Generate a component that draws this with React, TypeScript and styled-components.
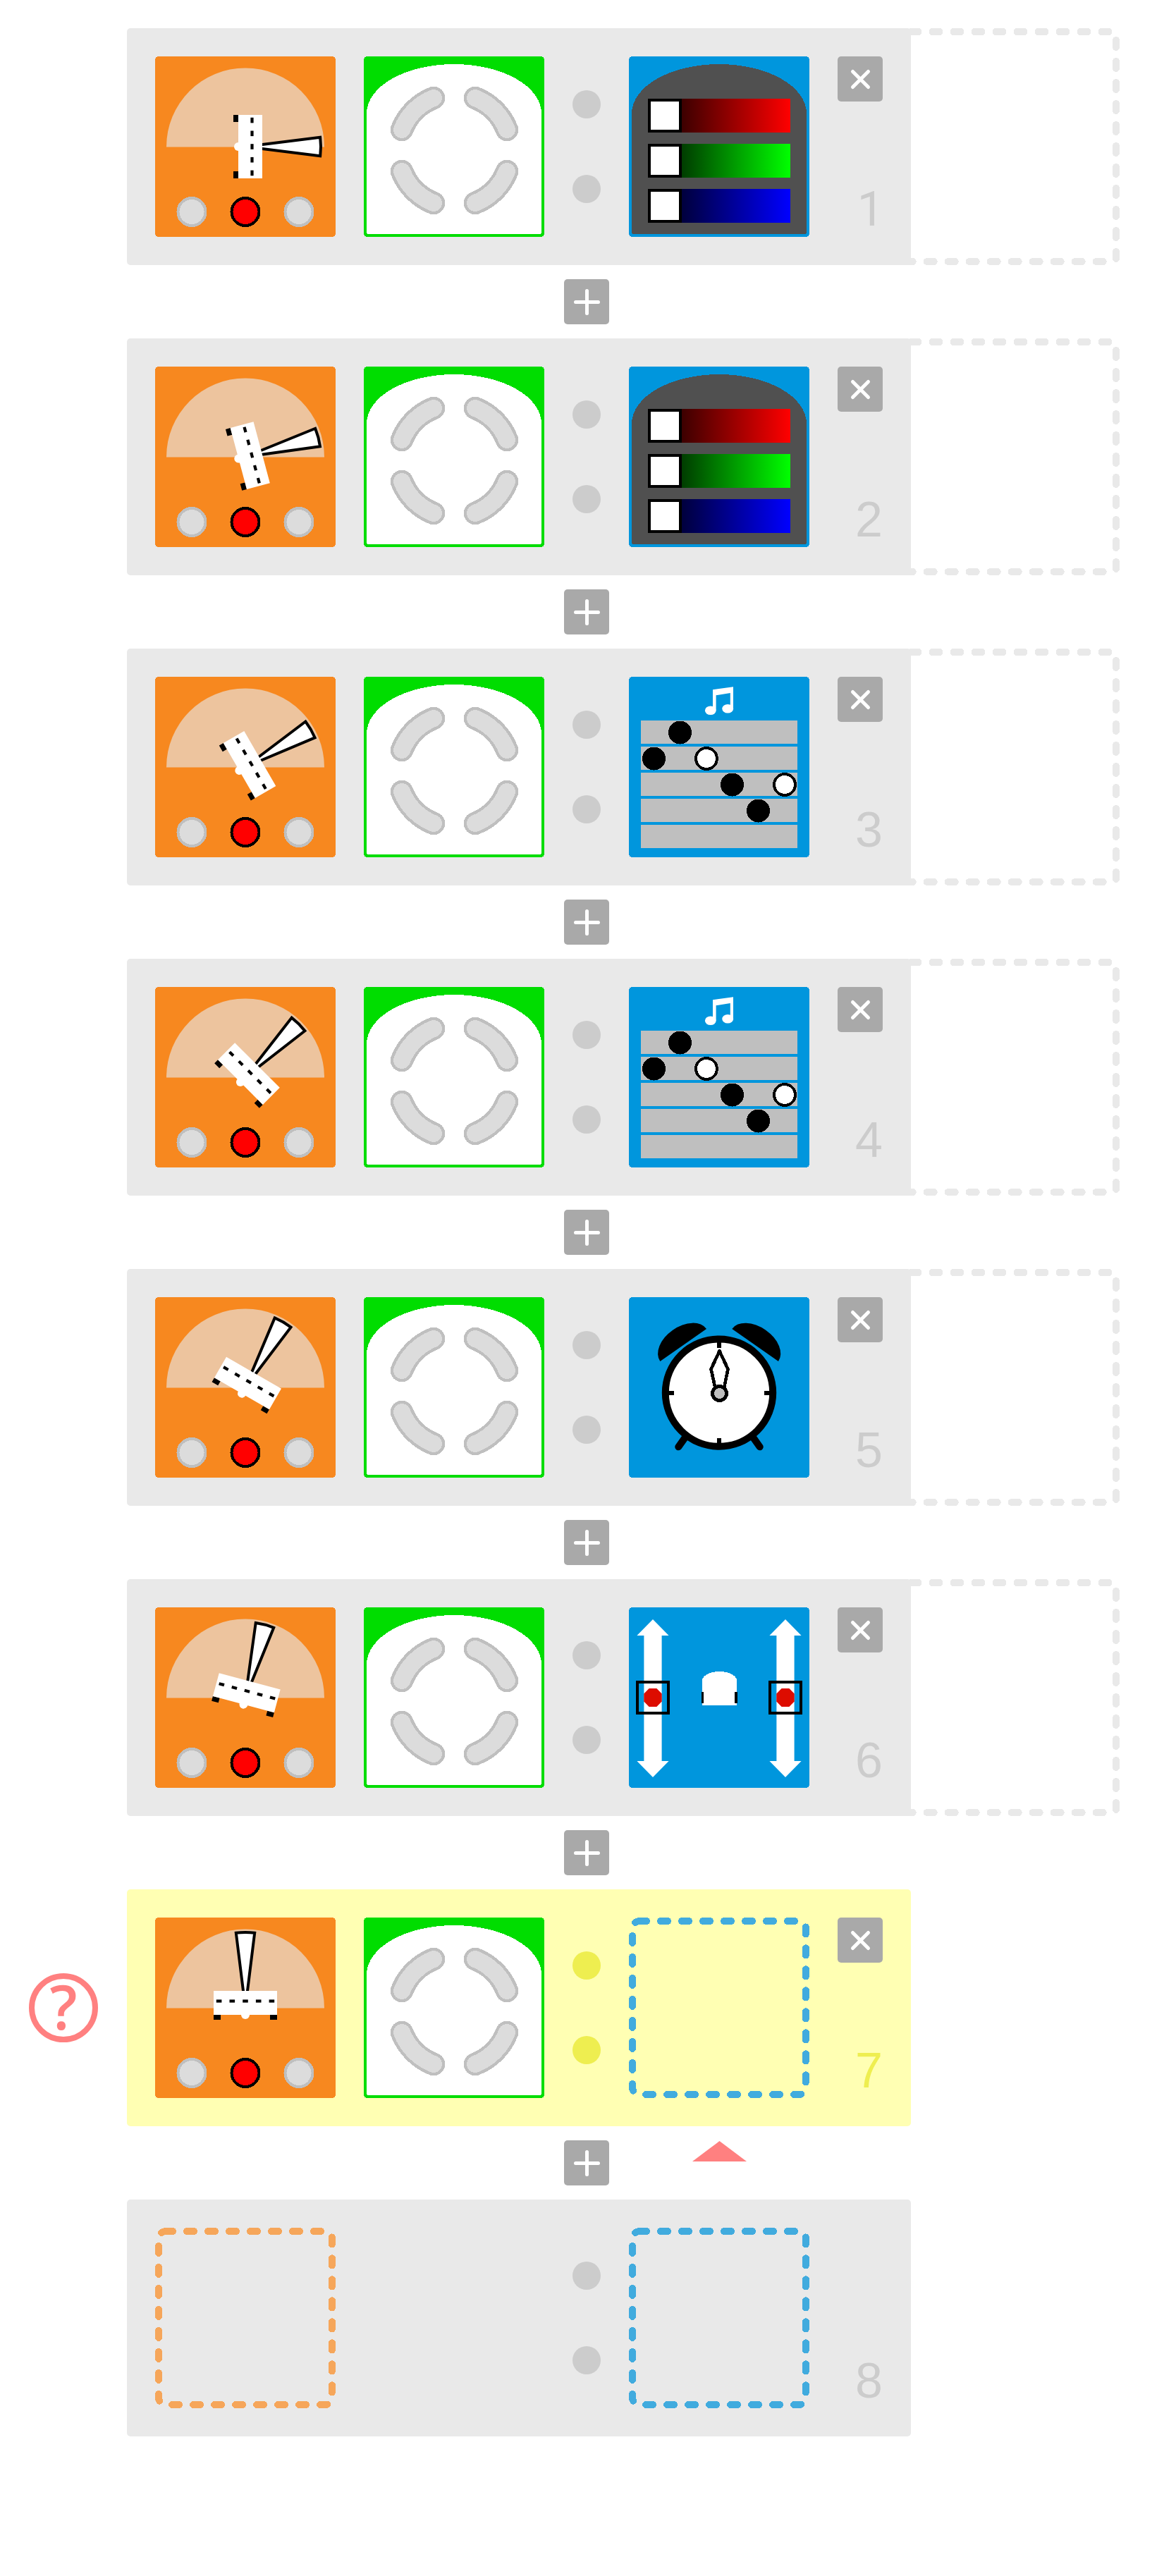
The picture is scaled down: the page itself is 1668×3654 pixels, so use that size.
import React from "react";
import styled, { createGlobalStyle } from "styled-components";

const colors = {
  event: "#f7881f",
  button: "#00dd00",
  action: "#0096dd",
  lane: "#e9e9e9",
  laneActive: "#ffffb3",
  mark: "#cccccc",
  markActive: "#eeee50",
  control: "#a9a9a9",
  hint: "#ff8080",
  off: "#dcdcdc",
  offEdge: "#bfbfbf",
};

const GlobalStyle = createGlobalStyle`
  body {
    margin: 0;
    background: #fff;
    font-family: "Liberation Sans", Arial, sans-serif;
  }
`;

const Program = styled.main`
  box-sizing: border-box;
  width: 1668px;
  min-height: 3654px;
  padding: 40px 0;
`;

const Row = styled.div`
  display: flex;
  height: 336px;
`;

const Gutter = styled.div`
  display: flex;
  flex: none;
  width: 180px;
  align-items: center;
  justify-content: center;
`;

const Hint = styled.div`
  box-sizing: border-box;
  width: 98px;
  height: 98px;
  border: 8px solid ${colors.hint};
  border-radius: 50%;
  color: ${colors.hint};
  font: 600 86px/77px "Open Sans", sans-serif;
  text-align: center;
`;

const Lane = styled.section<{ $active: boolean }>`
  box-sizing: border-box;
  display: flex;
  flex: none;
  gap: 40px;
  width: 1112px;
  padding: 40px;
  border-radius: 5px;
  background: ${(p) => (p.$active ? colors.laneActive : colors.lane)};
`;

const Card = styled.svg`
  display: block;
  flex: none;
  width: 256px;
  height: 256px;
`;

const EmptyCell = styled.div`
  flex: none;
  width: 256px;
`;

const Dots = styled.div`
  display: flex;
  flex-direction: column;
  flex: none;
  justify-content: center;
  gap: 80px;
  width: 40px;
`;

const Dot = styled.span<{ $active: boolean }>`
  height: 40px;
  border-radius: 50%;
  background: ${(p) => (p.$active ? colors.markActive : colors.mark)};
`;

const Side = styled.div`
  display: flex;
  flex-direction: column;
  flex: none;
  width: 64px;
`;

const SquareButton = styled.button`
  display: block;
  width: 64px;
  height: 64px;
  padding: 0;
  border: 0;
  border-radius: 5px;
  background: ${colors.control};
`;

const Glyph = styled.svg`
  display: block;
  width: 64px;
  height: 64px;
  fill: none;
  stroke: #fff;
  stroke-width: 5;
  stroke-linecap: round;
`;

const RowNumber = styled.span<{ $active: boolean; $narrow: boolean }>`
  margin-top: auto;
  padding-left: ${(p) => (p.$narrow ? "2px" : "0")};
  color: ${(p) => (p.$active ? colors.markActive : colors.mark)};
  font-family: ${(p) => (p.$narrow ? "Roboto" : '"Liberation Sans"')}, sans-serif;
  font-size: ${(p) => (p.$narrow ? 68 : 70)}px;
  line-height: ${(p) => (p.$narrow ? 78 : 78)}px;
  text-align: right;
  margin-right: ${(p) => (p.$narrow ? "-2px" : "0")};
`;

const Extension = styled.svg`
  display: block;
  flex: none;
  width: 296px;
  height: 336px;
  overflow: visible;
  fill: none;
  stroke: ${colors.lane};
  stroke-width: 10;
  stroke-linecap: round;
  stroke-dasharray: 10 20;
  shape-rendering: crispEdges;
`;

const Connector = styled.div`
  box-sizing: border-box;
  display: flex;
  gap: 118px;
  height: 104px;
  padding: 20px 0 0 800px;
`;

const Pointer = styled.svg`
  display: block;
  width: 77px;
  height: 29px;
  margin-top: 1px;
  fill: ${colors.hint};
`;

const BODY = "M4 81A124 70 0 0 1 252 81V249a3 3 0 0 1 -3 3H7a3 3 0 0 1 -3 -3Z";

function Tile({ fill }: { fill: string }) {
  return <rect width="256" height="256" rx="5" fill={fill} shapeRendering="crispEdges" />;
}

function ProximityCard({ angle }: { angle: number }) {
  const lamps = [
    { x: 52, fill: colors.off, edge: colors.offEdge },
    { x: 128, fill: "#ff0000", edge: "#000" },
    { x: 204, fill: colors.off, edge: colors.offEdge },
  ];
  return (
    <Card viewBox="0 0 256 256">
      <Tile fill={colors.event} />
      <path d="M16 128.4A112 112 0 0 1 240 128.4Z" fill="#edc49e" />
      <g transform={`rotate(${angle} 128 128)`}>
        <path
          d="M128 128L114.8 21.8A107 107 0 0 1 141.2 21.8Z"
          fill="#fff"
          stroke="#000"
          strokeWidth="4"
        />
        <path d="M83 138h10v7h-10zM163 138h10v7h-10z" fill="#000" />
        <circle cx="128" cy="138" r="6" fill="#fff" />
        <rect x="83" y="104" width="90" height="34" fill="#fff" />
        {[0, 1, 2, 3, 4].map((i) => (
          <rect key={i} x={86.8 + i * 18.7} y="116.4" width="7.6" height="4.2" fill="#000" />
        ))}
      </g>
      {lamps.map((l) => (
        <circle
          key={l.x}
          cx={l.x}
          cy="220.5"
          r="19.5"
          fill={l.fill}
          stroke={l.edge}
          strokeWidth="4"
          shapeRendering="crispEdges"
        />
      ))}
    </Card>
  );
}

function ButtonsCard() {
  const arc = "M54 104A80 80 0 0 1 99 59";
  const flips = ["1 1", "-1 1", "1 -1", "-1 -1"];
  return (
    <Card viewBox="0 0 256 256">
      <Tile fill={colors.button} />
      <path d={BODY} fill="#fff" shapeRendering="crispEdges" />
      {flips.map((s) => (
        <g
          key={s}
          transform={`translate(128.5 133.5) scale(${s}) translate(-128.5 -133.5)`}
          fill="none"
          strokeLinecap="round"
          shapeRendering="crispEdges"
        >
          <path d={arc} stroke={colors.offEdge} strokeWidth="32.5" />
          <path d={arc} stroke={colors.off} strokeWidth="24" />
        </g>
      ))}
    </Card>
  );
}

function ColorCard() {
  const channels = [
    { id: "red", color: "#ff0000", y: 60 },
    { id: "green", color: "#00ff00", y: 124 },
    { id: "blue", color: "#0000ff", y: 188 },
  ];
  return (
    <Card viewBox="0 0 256 256">
      <defs>
        {channels.map((c) => (
          <linearGradient key={c.id} id={`ramp-${c.id}`}>
            <stop offset="0" stopColor="#000" />
            <stop offset="1" stopColor={c.color} />
          </linearGradient>
        ))}
      </defs>
      <Tile fill={colors.action} />
      <path d={BODY} fill="#505050" shapeRendering="crispEdges" />
      {channels.map((c) => (
        <g key={c.id}>
          <rect x="27" y={c.y} width="202" height="48" fill={`url(#ramp-${c.id})`} />
          <rect x="29" y={c.y + 2} width="44" height="44" fill="#fff" stroke="#000" strokeWidth="4" />
        </g>
      ))}
    </Card>
  );
}

function MusicCard() {
  const notes = [
    { row: 1, long: false },
    { row: 0, long: false },
    { row: 1, long: true },
    { row: 2, long: false },
    { row: 3, long: false },
    { row: 2, long: true },
  ];
  return (
    <Card viewBox="0 0 256 256">
      <Tile fill={colors.action} />
      <g fill="#fff">
        <path d="M119 18.3L148 14.3V45.3H143.8V23L123.6 26.2V47.7H119Z" />
        <ellipse cx="115.8" cy="47.7" rx="7.9" ry="6.3" />
        <ellipse cx="140.2" cy="45.3" rx="7.9" ry="6.3" />
      </g>
      {[0, 1, 2, 3, 4].map((i) => (
        <rect key={i} x="17" y={62 + i * 37} width="222" height="33" fill={colors.offEdge} />
      ))}
      {notes.map((n, i) => (
        <circle
          key={i}
          cx={(n.long ? 36 : 35.5) + i * 37}
          cy={79 + n.row * 37}
          r={n.long ? 15 : 16.5}
          fill={n.long ? "#fff" : "#000"}
          stroke={n.long ? "#000" : "none"}
          strokeWidth="4"
          shapeRendering="crispEdges"
        />
      ))}
    </Card>
  );
}

function TimerCard() {
  return (
    <Card viewBox="0 0 256 256">
      <Tile fill={colors.action} />
      <path d="M44.3 91A40 26 -35 0 1 110 45Z" />
      <path d="M212 91A40 26 35 0 0 146.3 45Z" />
      <path d="M84 193L70.3 212.3M172 193L185.7 212.3" stroke="#000" strokeWidth="10" strokeLinecap="round" />
      <circle cx="128" cy="135.6" r="76.2" fill="#fff" stroke="#000" strokeWidth="10" />
      <path d="M128 60V72M128 200V212M52 136H64M192 136H204" stroke="#000" strokeWidth="6" />
      <g stroke="#000" shapeRendering="crispEdges">
        <path
          d="M122.5 129L116.5 102L128.5 76.5L140.5 102L135 129Z"
          fill="#fff"
          strokeWidth="4.6"
          strokeLinejoin="round"
        />
        <circle cx="128.5" cy="136.5" r="10" fill={colors.offEdge} strokeWidth="5" />
      </g>
    </Card>
  );
}

function MotorsCard() {
  return (
    <Card viewBox="0 0 256 256">
      <Tile fill={colors.action} />
      {[34, 222].map((x) => (
        <g key={x} transform={`translate(${x} 0)`}>
          <path
            d="M0 17L22.6 40H12.6V218H22.6L0 241L-22.6 218H-12.6V40H-22.6Z"
            fill="#fff"
          />
          <path
            d="M-5.4 115H5.4L12.7 122.5V133.5L5.4 141H-5.4L-12.7 133.5V122.5Z"
            fill="#dd0c00"
          />
          <rect x="-22" y="106" width="44" height="44" fill="none" stroke="#000" strokeWidth="4" />
        </g>
      ))}
      <g shapeRendering="crispEdges">
        <path d="M104 104A24.5 13 0 0 1 153 104V139H104Z" fill="#fff" />
        <path d="M103 120h3v16h-3zM150 120h4v16h-4z" fill="#000" />
      </g>
    </Card>
  );
}

function Placeholder({ color }: { color: string }) {
  return (
    <Card viewBox="0 0 256 256">
      <rect
        x="5"
        y="5"
        width="246"
        height="246"
        rx="10"
        fill="none"
        stroke={color}
        strokeWidth="10"
        strokeLinecap="round"
        strokeDasharray="10 20"
        shapeRendering="crispEdges"
      />
    </Card>
  );
}

type Action = "color" | "music" | "timer" | "motors" | "none";

interface Rule {
  angle?: number;
  action: Action;
  active?: boolean;
}

const rules: Rule[] = [
  { angle: 90, action: "color" },
  { angle: 75, action: "color" },
  { angle: 60, action: "music" },
  { angle: 45, action: "music" },
  { angle: 30, action: "timer" },
  { angle: 15, action: "motors" },
  { angle: 0, action: "none", active: true },
  { action: "none" },
];

function ActionCard({ kind }: { kind: Action }) {
  switch (kind) {
    case "color":
      return <ColorCard />;
    case "music":
      return <MusicCard />;
    case "timer":
      return <TimerCard />;
    case "motors":
      return <MotorsCard />;
    default:
      return <Placeholder color="#41abde" />;
  }
}

function RuleRow({ rule, index }: { rule: Rule; index: number }) {
  const active = Boolean(rule.active);
  const filled = rule.angle !== undefined;
  return (
    <Row>
      <Gutter>{active && <Hint>?</Hint>}</Gutter>
      <Lane $active={active}>
        {filled ? <ProximityCard angle={rule.angle ?? 0} /> : <Placeholder color="#f6a65a" />}
        {filled ? <ButtonsCard /> : <EmptyCell />}
        <Dots>
          <Dot $active={active} />
          <Dot $active={active} />
        </Dots>
        <ActionCard kind={rule.action} />
        <Side>
          {filled && (
            <SquareButton aria-label="Remove">
              <Glyph viewBox="0 0 64 64">
                <path d="M21.5 21.5L43.5 43.5M43.5 21.5L21.5 43.5" />
              </Glyph>
            </SquareButton>
          )}
          <RowNumber $active={active} $narrow={index === 0}>
            {index + 1}
          </RowNumber>
        </Side>
      </Lane>
      {rule.action !== "none" && (
        <Extension viewBox="0 0 296 336">
          <path d="M0.6 5H286a5 5 0 0 1 5 5V326a5 5 0 0 1 -5 5H-4" />
        </Extension>
      )}
    </Row>
  );
}

export default function App() {
  return (
    <>
      <GlobalStyle />
      <Program>
        {rules.map((rule, i) => (
          <React.Fragment key={i}>
            <RuleRow rule={rule} index={i} />
            {i < rules.length - 1 && (
              <Connector>
                <SquareButton aria-label="Insert">
                  <Glyph viewBox="0 0 64 64">
                    <path d="M16.5 32.5H48.5M32.5 16.5V48.5" />
                  </Glyph>
                </SquareButton>
                {rule.active && (
                  <Pointer viewBox="0 0 77 29">
                    <path d="M38.5 0L77 29H0Z" />
                  </Pointer>
                )}
              </Connector>
            )}
          </React.Fragment>
        ))}
      </Program>
    </>
  );
}
